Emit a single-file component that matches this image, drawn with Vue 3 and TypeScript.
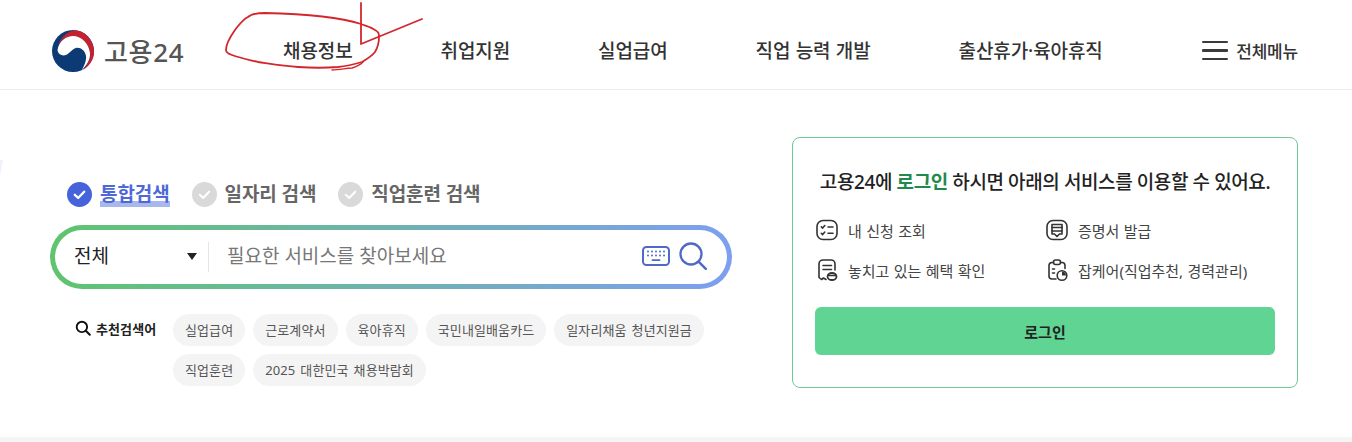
<script setup lang="ts">
const navItems: string[] = ['채용정보', '취업지원', '실업급여', '직업 능력 개발', '출산휴가·육아휴직']
const tagRows: string[][] = [
  ['실업급여', '근로계약서', '육아휴직', '국민내일배움카드', '일자리채움 청년지원금'],
  ['직업훈련', '2025 대한민국 채용박람회'],
]
</script>

<template>
  <div class="page">
    <header class="header">
      <div class="logo">
        <svg class="logo-mark" viewBox="0 0 42 42" width="42" height="42">
          <circle cx="21" cy="21" r="21" fill="#0b3a75" />
          <path d="M6 15C10 5 17 1 23 .2 33 1 42 10 42 22c0 8-5 14-11 18 5-6 8-12 7-17-1-9-8-17-17-17-7 0-12 4-15 9z" fill="#c8202f" />
          <path d="M5.500 20C7 11 14 6 21 6c9 0 16 8 17 17 .5 6-3 12-8 17 3-6 4.500-10 4-14-1-6-6-9-10-8-4 1-6 5-10 7-4 1.500-8-1-8.500-5z" fill="#fff" />
        </svg>
        <span class="logo-text">고용24</span>
      </div>
      <nav class="nav">
        <a v-for="item in navItems" :key="item" class="nav-item">{{ item }}</a>
      </nav>
      <div class="all-menu">
        <span class="burger"><i></i><i></i><i></i></span>
        <span>전체메뉴</span>
      </div>
    </header>

    <main class="main">
      <section class="search-area">
        <div class="tabs">
          <div class="tab active">
            <span class="check"><svg viewBox="0 0 24 24" width="25" height="25"><path d="M7.500 12.300l3.200 3 5.800-6" fill="none" stroke="#fff" stroke-width="2.200" stroke-linecap="round" stroke-linejoin="round" /></svg></span>
            <span class="tab-label">통합검색</span>
          </div>
          <div class="tab">
            <span class="check"><svg viewBox="0 0 24 24" width="25" height="25"><path d="M7.500 12.300l3.200 3 5.800-6" fill="none" stroke="#fff" stroke-width="2" stroke-linecap="round" stroke-linejoin="round" /></svg></span>
            <span class="tab-label">일자리 검색</span>
          </div>
          <div class="tab">
            <span class="check"><svg viewBox="0 0 24 24" width="25" height="25"><path d="M7.500 12.300l3.200 3 5.800-6" fill="none" stroke="#fff" stroke-width="2" stroke-linecap="round" stroke-linejoin="round" /></svg></span>
            <span class="tab-label">직업훈련 검색</span>
          </div>
        </div>

        <div class="search-box">
          <div class="search-inner">
            <div class="select">
              <span class="select-value">전체</span>
              <span class="caret"></span>
            </div>
            <span class="placeholder">필요한 서비스를 찾아보세요</span>
            <svg class="kbd" viewBox="0 0 28 20" width="28" height="20">
              <rect x="1" y="1" width="26" height="18" rx="3.500" fill="none" stroke="#4f69c6" stroke-width="2" />
              <g fill="#4f69c6">
                <circle cx="6" cy="5.500" r="1" /><circle cx="10" cy="5.500" r="1" /><circle cx="14" cy="5.500" r="1" /><circle cx="18" cy="5.500" r="1" /><circle cx="22" cy="5.500" r="1" />
                <circle cx="6" cy="9.500" r="1" /><circle cx="10" cy="9.500" r="1" /><circle cx="14" cy="9.500" r="1" /><circle cx="18" cy="9.500" r="1" /><circle cx="22" cy="9.500" r="1" />
                <rect x="9.500" y="13.200" width="9" height="1.800" rx=".9" />
              </g>
            </svg>
            <svg class="magnifier" viewBox="0 0 28 28" width="28" height="28">
              <circle cx="12" cy="12" r="10.500" fill="none" stroke="#4f69c6" stroke-width="2.300" />
              <path d="M19.800 19.800l7 7" stroke="#4f69c6" stroke-width="2.500" stroke-linecap="round" />
            </svg>
          </div>
        </div>

        <div class="recommend">
          <div class="rec-title">
            <svg viewBox="0 0 16 16" width="16" height="16">
              <circle cx="6.900" cy="6.900" r="5.200" fill="none" stroke="#111" stroke-width="1.900" />
              <path d="M10.800 10.800l4 4" stroke="#111" stroke-width="2" stroke-linecap="round" />
            </svg>
            <span>추천검색어</span>
          </div>
          <div class="tags">
            <div v-for="(row, i) in tagRows" :key="i" class="tag-row">
              <span v-for="tag in row" :key="tag" class="tag">{{ tag }}</span>
            </div>
          </div>
        </div>
      </section>

      <aside class="login-card">
        <p class="card-title">고용24에 <em>로그인</em> 하시면 아래의 서비스를 이용할 수 있어요.</p>
        <ul class="services">
          <li>
            <svg viewBox="0 0 24 24" width="24" height="24" fill="none" stroke="#333" stroke-width="1.600" stroke-linecap="round" stroke-linejoin="round">
              <rect x="2" y="2.500" width="20" height="19" rx="6" />
              <path d="M6.300 8.800l1.300 1.300 2.200-2.600M6.300 15.300l1.300 1.300 2.200-2.600M13 9h5M13 15.300h5" />
            </svg>
            <span>내 신청 조회</span>
          </li>
          <li>
            <svg viewBox="0 0 24 24" width="24" height="24" fill="none" stroke="#333" stroke-width="1.600" stroke-linecap="round" stroke-linejoin="round">
              <rect x="2" y="2.500" width="20" height="19" rx="6" />
              <path d="M7 6.500h10v9.500h-2.500l-2.500 2.500-2.500-2.500H7z" />
              <path d="M7 9.500h10M7 13h10" />
            </svg>
            <span>증명서 발급</span>
          </li>
          <li>
            <svg viewBox="0 0 24 24" width="24" height="24" fill="none" stroke="#333" stroke-width="1.600" stroke-linecap="round" stroke-linejoin="round">
              <path d="M11 21.500l-2.500-1.500-2 1.500-2.500-2V6a4 4 0 0 1 4-4h8a4 4 0 0 1 4 4v6" />
              <path d="M8 7.500h8.500M8 11.500h8.500" />
              <ellipse cx="17" cy="18.500" rx="4.500" ry="3.500" stroke-width="1.800" />
              <path d="M13 17.500h8" />
            </svg>
            <span>놓치고 있는 혜택 확인</span>
          </li>
          <li>
            <svg viewBox="0 0 24 24" width="24" height="24" fill="none" stroke="#333" stroke-width="1.600" stroke-linecap="round" stroke-linejoin="round">
              <path d="M8.500 4.500H7a3 3 0 0 0-3 3V18a3 3 0 0 0 3 3h4M15.500 4.500H17a3 3 0 0 1 3 3v3" />
              <rect x="8.500" y="2" width="7" height="4.500" rx="2" />
              <path d="M7.500 11h2M7.500 15h2" />
              <circle cx="17" cy="17.500" r="4.800" fill="#fff" />
              <path d="M17 17.500V13.400a4 4 0 0 1 4 4.100z" fill="#333" stroke="none" />
            </svg>
            <span>잡케어(직업추천, 경력관리)</span>
          </li>
        </ul>
        <button class="login-btn" type="button">로그인</button>
      </aside>
    </main>
    <div class="footer-band"></div>

    <span class="edge-mark"></span>
    <svg class="scribble" viewBox="0 0 1352 442" width="1352" height="442" fill="none" stroke="#d3272d" stroke-linecap="round" stroke-linejoin="round">
      <path d="M361 3v41l61-25" stroke-width="1.800" />
      <path d="M361 24C342 18 305 14 265 13c-8 0-14 1-17 4-6 3-9 8-13 13-5 7-9 14-9 20 0 3 3 4 6 5 8 3 18 5 26 7 14 2 26 4 40 5 14 1 28 1 40 0 9-1 17-3 24-5 5-3 10-6 13-10 3-5 4-10 4-15 0-3 0-5-4-7-4-3-9-4-14-6z" stroke-width="1.800" />
      <path d="M332 70c7-.5 14-1.500 20-2 5-1.500 8-3 11-6" stroke-width="1.400" />
    </svg>
  </div>
</template>

<style>
html, body { margin: 0; background: #fff; }
</style>

<style scoped>
.page {
  position: relative;
  width: 1352px;
  height: 442px;
  overflow: hidden;
  background: #fff;
  font-family: "Noto Sans", "Noto Sans CJK KR", sans-serif;
  color: #222;
  display: flex;
  flex-direction: column;
}
.header {
  height: 90px;
  flex: none;
  box-sizing: border-box;
  border-bottom: 1px solid #ececec;
  display: flex;
  align-items: center;
  padding: 12px 54px 0 52px;
}
.logo { display: flex; align-items: center; gap: 10px; width: 231px; flex: none; }
.logo-mark { display: block; }
.logo-text { font-size: 26px; font-weight: 500; color: #555; letter-spacing: 0.7px; white-space: nowrap; }
.nav { display: flex; gap: 88px; flex: 1; }
.nav-item { font-size: 19px; font-weight: 500; color: #333; white-space: nowrap; line-height: 26px; letter-spacing: -0.1px; word-spacing: 0.5px; }
.all-menu { display: flex; align-items: center; gap: 8px; font-size: 17px; font-weight: 500; color: #333; white-space: nowrap; letter-spacing: -0.2px; }
.burger { display: flex; flex-direction: column; gap: 6px; width: 26px; }
.burger i { display: block; height: 2.500px; background: #3a3a3a; border-radius: 1px; }

.main {
  flex: 1;
  display: flex;
  justify-content: space-between;
  padding: 47px 54px 0 50px;
}
.search-area { width: 682px; padding-top: 42px; }
.tabs { display: flex; align-items: center; gap: 22px; padding-left: 17px; height: 30px; }
.tab { display: flex; align-items: center; gap: 8px; font-size: 19px; font-weight: 700; color: #666; white-space: nowrap; line-height: 26px; letter-spacing: -0.1px; }
.check { width: 25px; height: 25px; border-radius: 50%; background: #d9d9d9; display: block; flex: none; }
.check svg { display: block; }
.tab.active .check { background: #4663dc; }
.tab.active .tab-label {
  color: #4e68d8;
  background: linear-gradient(transparent 78%, #a9b8ec 78%);
}
.search-box {
  margin-top: 16px;
  height: 64px;
  box-sizing: border-box;
  border-radius: 32px;
  padding: 5px;
  background: linear-gradient(90deg, #5fc46f 0%, #7d9ff0 100%);
}
.search-inner {
  height: 100%;
  background: #fff;
  border-radius: 27px;
  display: flex;
  align-items: center;
  padding-left: 19px;
  padding-right: 20px;
}
.select {
  width: 135px;
  height: 30px;
  box-sizing: border-box;
  border-right: 1px solid #e5e5e5;
  padding-right: 11px;
  display: flex;
  align-items: center;
  justify-content: space-between;
  font-size: 19px;
  line-height: 26px;
  color: #222;
  flex: none;
  margin-top: -1px;
}
.select-value { margin-top: -2px; }
.caret { width: 0; height: 0; border-left: 5px solid transparent; border-right: 5px solid transparent; border-top: 7px solid #222; }
.placeholder { margin-left: 18px; font-size: 19px; line-height: 26px; margin-top: -3px; color: #777; flex: 1; white-space: nowrap; }
.kbd { flex: none; margin-right: 9px; margin-top: -3px; }
.magnifier { flex: none; margin-top: -3px; }

.recommend { display: flex; margin-top: 25px; padding-left: 25px; }
.rec-title { display: flex; align-items: center; gap: 5px; height: 32px; width: 98px; flex: none; font-size: 13px; font-weight: 700; color: #222; white-space: nowrap; letter-spacing: 0.1px; align-self: flex-start; margin-top: -2px; }
.tags { display: flex; flex-direction: column; gap: 8px; }
.tag-row { display: flex; gap: 8px; }
.tag { height: 32px; line-height: 32px; padding: 0 12px; border-radius: 16px; background: #f4f4f4; font-size: 13px; color: #555; white-space: nowrap; letter-spacing: 0.1px; word-spacing: 1.500px; }

.login-card {
  width: 506px;
  height: 251px;
  box-sizing: border-box;
  border: 1px solid #6fc995;
  border-radius: 8px;
  padding: 0 22px;
  display: flex;
  flex-direction: column;
}
.card-title { margin: 31px 0 0; font-size: 19px; font-weight: 500; text-align: center; color: #222; white-space: nowrap; line-height: 26px; letter-spacing: -0.4px; }
.card-title em { font-style: normal; color: #1f8a4c; font-weight: 700; }
.services { list-style: none; margin: 23px 0 0; padding: 0; display: grid; grid-template-columns: 230px 1fr; row-gap: 16px; }
.services li { display: flex; align-items: center; gap: 9px; height: 24px; font-size: 15px; color: #444; white-space: nowrap; word-spacing: 0.5px; }
.services svg { flex: none; }
.login-btn {
  margin-top: 25px;
  height: 48px;
  border: none;
  border-radius: 6px;
  background: #60d593;
  font: inherit;
  font-size: 15px;
  font-weight: 700;
  color: #222;
}
.footer-band { height: 5px; flex: none; background: #f5f5f5; }
.edge-mark {
  position: absolute;
  left: 0;
  top: 160px;
  width: 3px;
  height: 16px;
  background: #eef2fd;
  clip-path: polygon(0 0, 100% 0, 0 100%);
}
.scribble { position: absolute; left: 0; top: 0; pointer-events: none; }
</style>
